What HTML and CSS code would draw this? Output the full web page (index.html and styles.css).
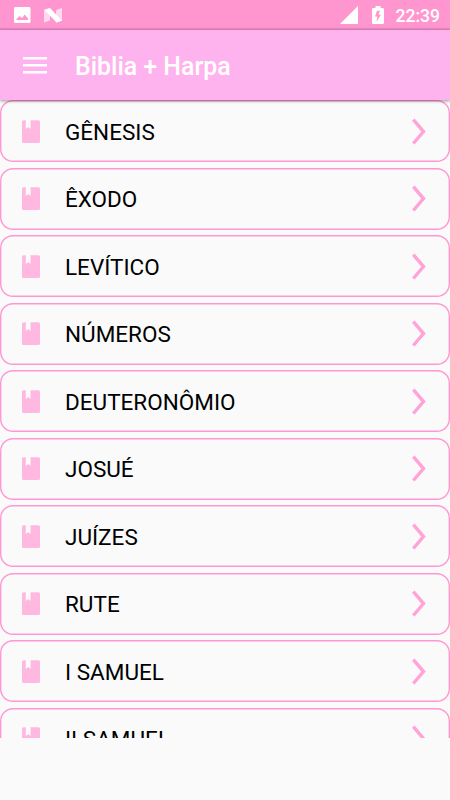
FILE: index.html
```html
<!DOCTYPE html>
<html lang="pt">
<head>
<meta charset="utf-8">
<title>Biblia + Harpa</title>
<link rel="stylesheet" href="styles.css">
</head>
<body>
<svg class="defs" aria-hidden="true">
  <symbol id="book" viewBox="0 0 18 23"><path d="M1.5 0.3H3.8V9L6.3 7L8.6 9V0.3H16.5Q18 0.3 18 1.8V21.4Q18 22.9 16.5 22.9H1.5Q0 22.9 0 21.4V1.8Q0 0.3 1.5 0.3Z"/></symbol>
  <symbol id="chevron" viewBox="0 0 14 27"><path d="M1.3 1.7L11.5 13.6L1.3 25.5"/></symbol>
</svg>
<div class="status">
  <svg class="picture" viewBox="0 0 17 16"><path fill-rule="evenodd" d="M1.5 0H15Q16.5 0 16.5 1.5V14.5Q16.5 16 15 16H1.5Q0 16 0 14.5V1.5Q0 0 1.5 0ZM2.5 13H14V11.5L10.8 7.5L8 11L5.5 9L2.5 12Z"/></svg>
  <svg class="nougat" viewBox="0 0 18 15"><path opacity=".65" d="M0 2L6 0V12.5L0 14.5ZM12 2L18 0V12.5L12 14.5Z"/><path d="M.5 1.8L6 0L18 12.7L12.5 14.5Z"/></svg>
  <svg class="signal" viewBox="0 0 18 18"><path d="M18 0V18H0Z"/></svg>
  <svg class="battery" viewBox="0 0 12 18"><path fill-rule="evenodd" d="M3.5 0H8.5V2H10.5Q12 2 12 3.3V16.7Q12 18 10.7 18H1.3Q0 18 0 16.7V3.3Q0 2 1.3 2H3.5ZM5 4.7L3 10.5H5.3L4.5 15.7L9 8.8H6.5L8 4.7Z"/></svg>
  <span class="clock">22:39</span>
</div>
<header class="bar">
  <svg class="menu" viewBox="0 0 24 17"><path d="M0 0H24V2.5H0ZM0 7H24V9.5H0ZM0 14H24V16.5H0Z"/></svg>
  <h1>Biblia + Harpa</h1>
</header>
<main class="list">
  <div class="row"><svg class="book"><use href="#book"/></svg><span>GÊNESIS</span><svg class="chevron"><use href="#chevron"/></svg></div>
  <div class="row"><svg class="book"><use href="#book"/></svg><span>ÊXODO</span><svg class="chevron"><use href="#chevron"/></svg></div>
  <div class="row"><svg class="book"><use href="#book"/></svg><span>LEVÍTICO</span><svg class="chevron"><use href="#chevron"/></svg></div>
  <div class="row"><svg class="book"><use href="#book"/></svg><span>NÚMEROS</span><svg class="chevron"><use href="#chevron"/></svg></div>
  <div class="row"><svg class="book"><use href="#book"/></svg><span>DEUTERONÔMIO</span><svg class="chevron"><use href="#chevron"/></svg></div>
  <div class="row"><svg class="book"><use href="#book"/></svg><span>JOSUÉ</span><svg class="chevron"><use href="#chevron"/></svg></div>
  <div class="row"><svg class="book"><use href="#book"/></svg><span>JUÍZES</span><svg class="chevron"><use href="#chevron"/></svg></div>
  <div class="row"><svg class="book"><use href="#book"/></svg><span>RUTE</span><svg class="chevron"><use href="#chevron"/></svg></div>
  <div class="row"><svg class="book"><use href="#book"/></svg><span>I SAMUEL</span><svg class="chevron"><use href="#chevron"/></svg></div>
  <div class="row"><svg class="book"><use href="#book"/></svg><span>II SAMUEL</span><svg class="chevron"><use href="#chevron"/></svg></div>
</main>
</body>
</html>
```
FILE: styles.css
```css
* { box-sizing: border-box; }

body {
  margin: 0;
  height: 800px;
  overflow: hidden;
  background: #fafafa;
  color: #000;
  font-family: Roboto, "Liberation Sans", sans-serif;
}

.defs { display: none; }

.status {
  display: flex;
  height: 30px;
  padding: 0 10px 0 14px;
  background: linear-gradient(#ff96cf 27px, #d981b4);
  fill: #fff;
  color: #fff;
}

.picture { width: 17px; height: 16px; margin-top: 7px; }
.nougat { width: 18px; height: 15px; margin: 8px 0 0 13px; }
.signal { width: 18px; height: 18px; margin: 6px 0 0 auto; }
.battery { width: 12px; height: 18px; margin: 6px 12px 0 14px; }
.clock { font-size: 17.5px; font-weight: 500; line-height: 32px; }

.bar {
  position: relative;
  z-index: 1;
  display: flex;
  align-items: center;
  height: 70px;
  padding-left: 23px;
  background: #ffb3ee;
  box-shadow: 0 1px 3px rgba(0, 0, 0, 0.4);
}

.menu { width: 24px; height: 17px; fill: #fff; }

h1 {
  margin: 3px 0 0 28px;
  color: #fff;
  font-size: 24.9px;
  font-weight: 500;
  line-height: 30px;
}

.list {
  display: flex;
  flex-direction: column;
  gap: 5.5px;
  height: 637.5px;
  overflow: hidden;
}

.row {
  display: flex;
  flex: none;
  align-items: center;
  height: 62px;
  padding: 0 24px 0 22px;
  border-radius: 13px;
  box-shadow: inset 0 0 0 1.4px #ff97d3;
  font-size: 22.5px;
  line-height: 28px;
}

.book { width: 18px; height: 23px; fill: #ffb9e0; }
.row span { margin: 1.5px 0 0 25px; }

.chevron {
  width: 14px;
  height: 27px;
  margin-left: auto;
  fill: none;
  stroke: #ffa3d8;
  stroke-width: 3.4;
}
```
